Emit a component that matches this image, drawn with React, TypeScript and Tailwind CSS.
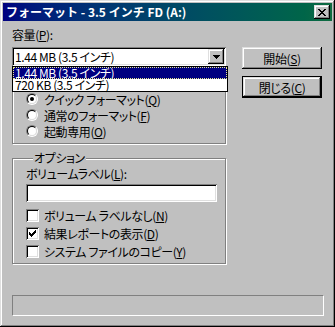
const raised =
  "shadow-[inset_-1px_-1px_#000,inset_1px_1px_#dfdfdf,inset_-2px_-2px_#808080,inset_2px_2px_#fff]";
const sunken =
  "shadow-[inset_1px_1px_#808080,inset_-1px_-1px_#fff,inset_2px_2px_#000,inset_-2px_-2px_#dfdfdf]";
const etched = "border border-[#808080] shadow-[inset_1px_1px_#fff,1px_1px_#fff]";

function CloseGlyph() {
  const rows = ["##....##", ".##..##.", "..####..", "...##...", "..####..", ".##..##.", "##....##"];
  return (
    <svg width="8" height="7" viewBox="0 0 8 7" shapeRendering="crispEdges">
      {rows.flatMap((r, y) =>
        r.split("").map((c, x) => (c === "#" ? <rect key={`${x}-${y}`} x={x} y={y} width="1" height="1" fill="#000" /> : null)),
      )}
    </svg>
  );
}

function ArrowGlyph() {
  return (
    <svg width="7" height="4" viewBox="0 0 7 4" shapeRendering="crispEdges">
      <rect x="0" y="0" width="7" height="1" fill="#000" />
      <rect x="1" y="1" width="5" height="1" fill="#000" />
      <rect x="2" y="2" width="3" height="1" fill="#000" />
      <rect x="3" y="3" width="1" height="1" fill="#000" />
    </svg>
  );
}

function CheckGlyph() {
  const rows = ["......#", ".....##", "#...###", "##.###.", "#####..", ".###...", "..#...."];
  return (
    <svg width="7" height="7" viewBox="0 0 7 7" shapeRendering="crispEdges">
      {rows.flatMap((r, y) =>
        r.split("").map((c, x) => (c === "#" ? <rect key={`${x}-${y}`} x={x} y={y} width="1" height="1" fill="#000" /> : null)),
      )}
    </svg>
  );
}

function Radio({ label, keyChar, checked }: { label: string; keyChar: string; checked?: boolean }) {
  return (
    <div className="flex h-[16px] items-center">
      <div className="flex h-[12px] w-[12px] rounded-full border border-t-[#808080] border-l-[#808080] border-r-white border-b-white">
        <div className="flex flex-1 items-center justify-center rounded-full border border-t-black border-l-black border-r-[#dfdfdf] border-b-[#dfdfdf] bg-white">
          {checked && <div className="h-[4px] w-[4px] rounded-full bg-black" />}
        </div>
      </div>
      <span className="ml-[6px] leading-[13px]">
        {label}(<u>{keyChar}</u>)
      </span>
    </div>
  );
}

function Check({ label, keyChar, checked }: { label: string; keyChar: string; checked?: boolean }) {
  return (
    <div className="flex h-[18px] items-start">
      <div className={`mt-[2px] flex h-[13px] w-[13px] items-center justify-center bg-white ${sunken}`}>
        {checked && <CheckGlyph />}
      </div>
      <span className="ml-[5px] mt-[2px] leading-[13px]">
        {label}(<u>{keyChar}</u>)
      </span>
    </div>
  );
}

export default function App() {
  return (
    <div
      className={`flex h-[327px] w-[335px] flex-col bg-[#c0c0c0] p-[3px] text-[12px] tracking-[-0.4px] text-black font-['MS_UI_Gothic','Noto_Sans_CJK_JP',sans-serif] [font-feature-settings:'palt'] ${raised}`}
    >
      <div className="flex h-[18px] items-center bg-linear-to-r from-[#000080] to-[#106b40] pl-[3px] pr-[2px]">
        <span className="flex-1 text-[12px] leading-[14px] font-bold tracking-normal text-white [font-feature-settings:normal]">
          フォーマット - 3.5 インチ FD (A:)
        </span>
        <button className={`flex h-[14px] w-[16px] items-center justify-center bg-[#c0c0c0] ${raised}`}>
          <CloseGlyph />
        </button>
      </div>

      <div className="flex flex-col px-[9px]">
        <div className="flex">
          <div className="flex w-[215px] flex-col">
            <div className="mt-[7px] leading-[13px]">
              容量(<u>P</u>):
            </div>

            <div className="relative mt-[6px] h-[19px] w-[214px]">
              <div className={`flex h-full w-full items-center bg-white pl-[3px] pr-[2px] ${sunken}`}>
                <span className="flex-1 leading-[13px]">1.44 MB (3.5 インチ)</span>
                <div className={`flex h-[15px] w-[16px] items-center justify-center bg-[#c0c0c0] ${raised}`}>
                  <ArrowGlyph />
                </div>
              </div>
              {/* open drop-down list lies over the format-type group */}
              <div className="absolute left-0 top-full z-10 flex h-[26px] w-[216px] flex-col border border-black bg-white">
                <div className="h-[12px] bg-[#000080] pl-[2px] leading-[12px] text-white outline-1 -outline-offset-1 outline-dotted outline-[#e8e890]">
                  1.44 MB (3.5 インチ)
                </div>
                <div className="h-[12px] pl-[2px] leading-[12px]">720 KB (3.5 インチ)</div>
              </div>
            </div>

            <div className={`mt-[12px] w-[214px] pb-[4px] pl-[13px] pt-[12px] ${etched}`}>
              <Radio label="クイック フォーマット" keyChar="Q" checked />
              <Radio label="通常のフォーマット" keyChar="F" />
              <Radio label="起動専用" keyChar="O" />
            </div>

            <fieldset className={`mt-[7px] w-[214px] pb-[2px] pl-[13px] ${etched}`}>
              <legend className="ml-[7px] bg-[#c0c0c0] px-[1px] leading-[14px]">オプション</legend>
              <div className="mt-[2px] leading-[13px]">
                ボリュームラベル(<u>L</u>):
              </div>
              <div className={`mt-[4px] h-[18px] w-[191px] bg-white ${sunken}`} />
              <div className="mt-[5px] flex flex-col">
                <Check label="ボリューム ラベルなし" keyChar="N" />
                <Check label="結果レポートの表示" keyChar="D" checked />
                <Check label="システム ファイルのコピー" keyChar="Y" />
              </div>
            </fieldset>
          </div>

          <div className="ml-[15px] mt-[26px] flex w-[80px] flex-col gap-[7px]">
            <button className={`flex h-[22px] items-center justify-center bg-[#c0c0c0] leading-[13px] ${raised}`}>
              開始(<u>S</u>)
            </button>
            <button
              className={`flex h-[22px] items-center justify-center border border-black bg-[#c0c0c0] leading-[13px] ${raised}`}
            >
              閉じる(<u>C</u>)
            </button>
          </div>
        </div>

        <div className="mt-[31px] h-[21px] w-[312px] border border-t-[#808080] border-l-[#808080] border-r-white border-b-white" />
      </div>
    </div>
  );
}
